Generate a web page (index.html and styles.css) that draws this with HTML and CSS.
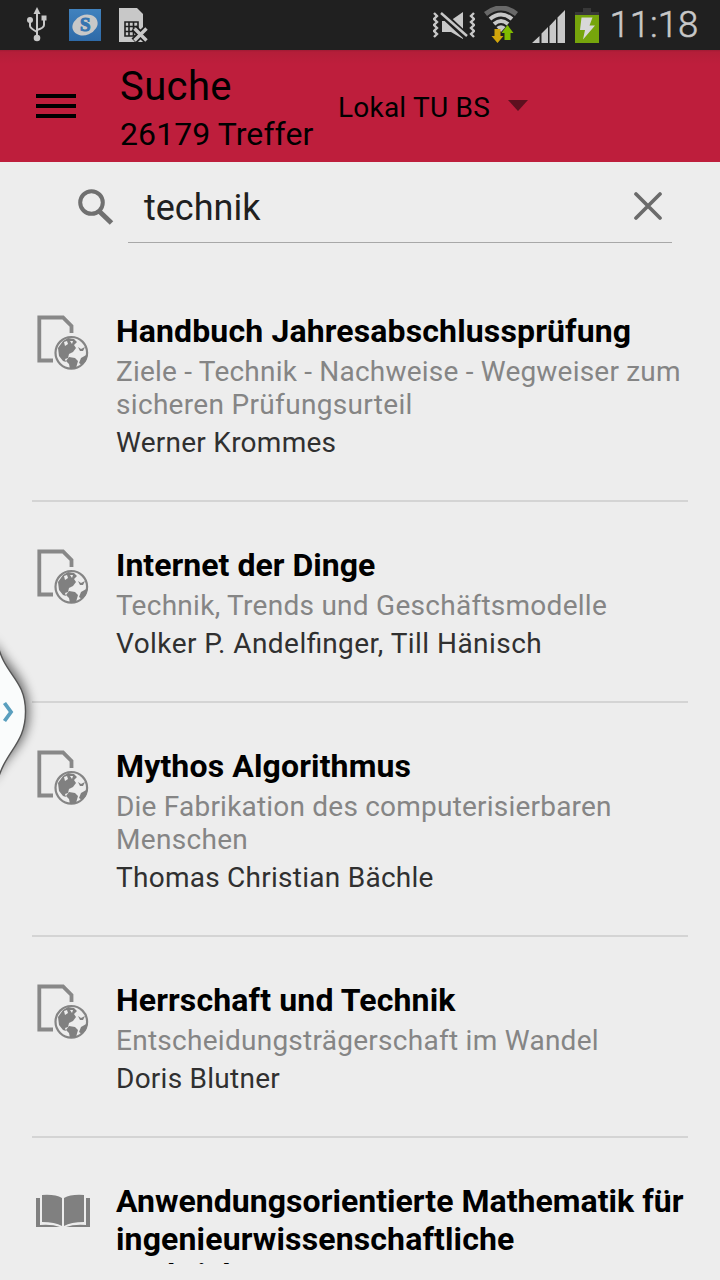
FILE: index.html
```html
<!DOCTYPE html>
<html lang="de">
<head>
<meta charset="utf-8">
<title>Suche</title>
<link rel="stylesheet" href="styles.css">
</head>
<body>
<svg class="defs" width="0" height="0" aria-hidden="true">
  <symbol id="ebook" viewBox="0 0 56 58">
    <path d="M17 45.500H3.300V2.500H27L35.500 11V18" fill="none" stroke="#888" stroke-width="3.800"/>
    <circle cx="35.300" cy="37.800" r="18.500" fill="#ededed"/>
    <circle cx="35.300" cy="37.800" r="15.800" fill="#ededed" stroke="#858585" stroke-width="2.200"/>
    <path d="M22 33l5-7 5-3 6 1 3 3-3 3 2 3-3 4-4 2-1 4-3 1 1 3-3-1-4-5zM33 42l6 1 3 3-2 7-6 1-1-5-3-3zM42 32l3 2 4-2-2 4-3 0zM45 43l7-4-2 7-4 4-3-2z" fill="#808080"/>
    <path d="M28 27l3-1 1 3-3 2zM34 26h3l-1 3z" fill="#ededed"/>
  </symbol>
</svg>
<header class="status">
  <svg class="usb" width="22" height="36" viewBox="0 0 22 36" fill="none" stroke="#c8c8c8" stroke-width="2">
    <path d="M11 4V31M4 13V19Q4 21 11 25M18 12V18Q18 21 11 23"/>
    <path d="M11 0l3.500 7h-7z" fill="#c8c8c8" stroke="none"/>
    <circle cx="4" cy="13" r="3" fill="#c8c8c8" stroke="none"/>
    <path d="M15.500 8.500h5v5h-5z" fill="#c8c8c8" stroke="none"/>
    <circle cx="11" cy="31" r="3.300" fill="#c8c8c8" stroke="none"/>
  </svg>
  <span class="app-badge"><span class="app-oval"><b>S</b></span></span>
  <svg class="sim" width="30" height="36" viewBox="0 0 30 36">
    <path d="M0 1h18l6 6v28H0z" fill="#c8c8c8"/>
    <path d="M6 15h13v14H6zM6 19.500h13M6 24.500h13M10 15v14M14.500 15v14" fill="none" stroke="#202020" stroke-width="1.600"/>
    <path d="M15 21l13 13M28 21L15 34" stroke="#202020" stroke-width="7"/>
    <path d="M15.500 21.500l12 12M27.500 21.500l-12 12" stroke="#c8c8c8" stroke-width="3.400"/>
  </svg>
  <div class="status-right">
    <svg class="mute" width="42" height="30" viewBox="0 0 42 30">
      <path d="M1 2l3 3-3 3 3 3-3 3 3 3-3 3 3 3-3 3M41 2l-3 3 3 3-3 3 3 3-3 3 3 3-3 3 3 3" transform="translate(0 -1)" fill="none" stroke="#c8c8c8" stroke-width="2.400"/>
      <path d="M9 9h8L30 0v27L18 20H9z" fill="#c8c8c8"/>
      <path d="M7 0l28 26" stroke="#202020" stroke-width="7"/>
      <path d="M8 1l26 23" stroke="#c8c8c8" stroke-width="2.500"/>
    </svg>
    <svg class="wifi" width="34" height="38" viewBox="0 0 34 38">
      <path d="M1.500 8Q17-4 32.500 8" fill="none" stroke="#686868" stroke-width="5"/>
      <path d="M6 13Q17 4 28 13M10 18Q17 12 24 18" fill="none" stroke="#c8c8c8" stroke-width="4"/>
      <path d="M12.500 21Q17 17.500 21.500 21L17 26z" fill="#c8c8c8"/>
      <path d="M10.500 23h6v7h3l-6 7-6-7h3z" fill="#d2a60c"/>
      <path d="M20.500 34h6v-7h3l-6-8-6 8h3z" fill="#80bc00"/>
    </svg>
    <svg class="signal" width="33" height="34" viewBox="0 0 33 34"><path d="M0 33L7.500 26v7zM9.500 23.500L16 17v16H9.500zM17.500 16L24 9v24h-6.500zM25.500 7.500L33 0v33h-7.500z" fill="#c8c8c8"/></svg>
    <svg class="battery" width="24" height="35" viewBox="0 0 24 35"><path d="M8 0h8v4h8v4H0V4h8z" fill="#383838"/><path d="M0 7h24v28H0z" fill="#76a50c"/><path d="M6.500 9.500h11l-3 8H20L8 31.500l2-9.500H5z" fill="#d8d8d8"/></svg>
    <span class="clock">11:18</span>
  </div>
</header>
<nav class="bar">
  <div class="menu"><i></i><i></i><i></i></div>
  <div class="heading"><div class="title">Suche</div><div class="hits">26179 Treffer</div></div>
  <div class="scope">Lokal TU BS</div>
  <div class="caret"></div>
</nav>
<section class="search">
  <svg class="glass" width="36" height="36" viewBox="0 0 36 36" fill="none" stroke="#707070"><circle cx="13.500" cy="13.500" r="11.300" stroke-width="4"/><path d="M21.500 22.500l12 11.500" stroke-width="5"/></svg>
  <div class="field"><span class="query">technik</span>
    <svg class="clear" width="28" height="28" viewBox="0 0 28 28"><path d="M2 2l24 24M26 2L2 26" stroke="#6b6b6b" stroke-width="3.700" stroke-linecap="round"/></svg>
  </div>
</section>
<main class="list">
  <article class="item"><svg class="icon" width="56" height="58"><use href="#ebook"/></svg><div class="text">
    <h2>Handbuch Jahresabschlussprüfung</h2>
    <p class="sub">Ziele - Technik - Nachweise - Wegweiser zum<br><span class="wide">sicheren Prüfungsurteil</span></p>
    <p class="author">Werner Krommes</p></div></article>
  <article class="item"><svg class="icon" width="56" height="58"><use href="#ebook"/></svg><div class="text">
    <h2 class="snug">Internet der Dinge</h2>
    <p class="sub loose">Technik, Trends und Geschäftsmodelle</p>
    <p class="author names">Volker P. Andel<span class="lig">fi</span>nger, Till Hänisch</p></div></article>
  <article class="item"><svg class="icon" width="56" height="58"><use href="#ebook"/></svg><div class="text">
    <h2>Mythos Algorithmus</h2>
    <p class="sub">Die Fabrikation des computerisierbaren<br><span class="wide">Menschen</span></p>
    <p class="author">Thomas Christian Bächle</p></div></article>
  <article class="item"><svg class="icon" width="56" height="58"><use href="#ebook"/></svg><div class="text">
    <h2>Herrschaft und Technik</h2>
    <p class="sub loose">Entscheidungsträgerschaft im Wandel</p>
    <p class="author">Doris Blutner</p></div></article>
  <article class="item"><svg class="icon book" width="56" height="58" viewBox="0 0 56 58">
      <path d="M0 13h4v27q12-1 20 2H0zM54 13h-4v27q-12-1-20 2h24z" fill="#808080"/>
      <path d="M6 10q13-1 20 3v28q-7-4-20-4zM48 10q-13-1-20 3v28q7-4 20-4z" fill="#808080"/>
    </svg><div class="text">
    <h2><span class="snug">Anwendungsorientierte Mathematik für</span><br>ingenieurwissenschaftliche<span class="tail">Fachrichtungen</span></h2></div></article>
</main>
<svg class="handle" width="60" height="170" viewBox="0 0 60 170">
  <defs><filter id="soft" x="-50%" y="-20%" width="200%" height="140%"><feGaussianBlur stdDeviation="5.500"/></filter></defs>
  <path d="M-8 8C4 34 29 46 29 82S2 126-8 154z" fill="#000" opacity=".55" filter="url(#soft)"/>
  <path d="M-3 11C3 45 25.500 48 25.500 81.500C25.500 115 5 120-3 153z" fill="#fafcfc" stroke="#555" stroke-width="1.400"/>
  <path d="M4.500 73l6.500 9-6.500 9" fill="none" stroke="#5a9fbe" stroke-width="3.800"/>
</svg>
</body>
</html>
```
FILE: styles.css
```css
* { box-sizing: border-box; }
body { margin: 0; width: 720px; height: 1280px; overflow: hidden; position: relative; background: #ededed; font-family: Roboto, sans-serif; color: #000; }
h2, p { margin: 0; }
svg { display: block; flex: none; }
.defs { position: absolute; }
.status { height: 50px; background: #202020; display: flex; align-items: flex-start; padding-left: 26px; }
.usb { margin-top: 7px; }
.app-badge { width: 32px; height: 32px; margin: 9px 0 0 21px; background: linear-gradient(#4182be, #2e6aa8); display: flex; align-items: center; justify-content: center; }
.app-oval { width: 26px; height: 20px; border-radius: 50%; background: #c8c8c8; transform: rotate(-22deg); display: flex; align-items: center; justify-content: center; }
.app-oval b { font: bold 19px/20px "Liberation Serif", serif; color: #3574b0; transform: rotate(22deg); -webkit-text-stroke: 1px #3574b0; }
.sim { margin: 7px 0 0 18px; }
.status-right { display: flex; margin-left: auto; width: 288px; }
.mute { margin-top: 12px; margin-left: 1px; }
.wifi { margin: 6px 0 0 9px; }
.signal { margin: 10px 0 0 14px; }
.battery { margin: 8px 0 0 10px; }
.clock { margin-left: 10.5px; font-size: 36.5px; line-height: 50px; color: #c8c8c8; white-space: nowrap; font-weight: 300; -webkit-text-stroke: .5px #c8c8c8; }
.bar { height: 112px; background: linear-gradient(#a01b34 0, #b41e39 2px, #be1e3c 14px); display: flex; padding-left: 36px; }
.menu { width: 40px; margin-top: 44px; display: flex; flex-direction: column; gap: 6px; }
.menu i { height: 4px; background: #000; }
.heading { width: 218px; padding: 13px 0 0 44px; white-space: nowrap; }
.title { font-size: 40px; line-height: 48px; letter-spacing: .4px; }
.hits { font-size: 32px; line-height: 46px; letter-spacing: .08px; }
.scope { width: 170px; margin-left: 44px; padding-top: 41px; font-size: 28px; line-height: 34px; white-space: nowrap; letter-spacing: .22px; }
.caret { width: 20px; height: 11px; margin-top: 50px; background: #5d101f; clip-path: polygon(0 0, 100% 0, 50% 100%); }
.search { height: 106px; display: flex; padding-left: 78px; }
.glass { margin-top: 27px; }
.field { margin-left: 14px; width: 544px; height: 81px; border-bottom: 1px solid #a8a8a8; display: flex; justify-content: space-between; padding: 25px 10px 0 16px; }
.query { font-size: 36px; line-height: 42px; color: #202020; }
.clear { margin-top: 5px; }
.list { height: 996px; padding: 0 32px; overflow: hidden; }
.item { display: flex; padding: 44px 0 41px 4px; border-bottom: 2px solid #d4d4d4; }
.icon { margin-top: 3px; margin-right: 24px; }
.text { white-space: nowrap; }
h2 { font-size: 32px; line-height: 38px; font-weight: 700; letter-spacing: .14px; }
.snug { letter-spacing: .03px; }
.tail { display: block; margin-top: -2px; }
.sub { margin-top: 5px; font-size: 28px; line-height: 33px; color: #858585; letter-spacing: .21px; }
.loose { letter-spacing: .27px; }
.wide { letter-spacing: .32px; }
.author { margin-top: 5px; font-size: 28px; line-height: 33px; color: #303030; letter-spacing: .26px; }
.names { letter-spacing: .45px; }
.lig { letter-spacing: 0; font-variant-ligatures: common-ligatures; }
.handle { position: absolute; left: 0; top: 630px; }
```
